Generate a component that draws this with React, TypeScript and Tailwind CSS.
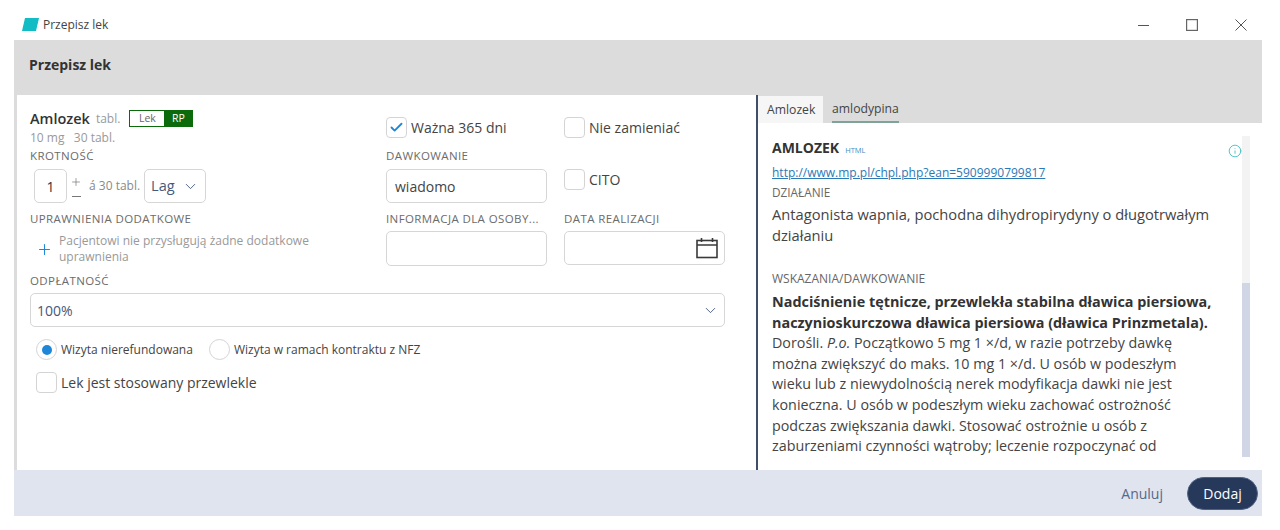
import { ChevronDown, Check, Plus, Info } from 'lucide-react';

const Label = ({ children, className = '' }: { children: React.ReactNode; className?: string }) => (
  <div className={`h-[16px] text-[11.5px] leading-[16px] tracking-[0.4px] text-[#6b6b6b] whitespace-nowrap ${className}`}>{children}</div>
);

const Box = ({ checked = false }: { checked?: boolean }) => (
  <span className="flex h-[21px] w-[21px] shrink-0 items-center justify-center rounded-[4px] border border-[#d4d4d4] bg-white">
    {checked && <Check size={15} strokeWidth={3} className="text-[#1f87d8]" />}
  </span>
);

const field = 'rounded-[5px] border border-[#d6d6d6] bg-white';

const CalendarIcon = () => (
  <svg width="22" height="22" viewBox="0 0 22 22" fill="none" stroke="#3a3a3a" strokeWidth="1.6">
    <rect x="1" y="3.5" width="20" height="17" />
    <path d="M1 8h20M5.5 1v4M16.5 1v4" />
  </svg>
);

export default function App() {
  return (
    <div className="h-[530px] w-[1280px] overflow-hidden bg-white font-['Open_Sans',sans-serif] text-[#333]">
      <div className="mx-[14px] h-[516px] w-[1248px] flex flex-col">
        {/* Title bar */}
        <div className="flex h-[40px] shrink-0 items-center bg-white pl-[8px] pr-[15px] pt-[9px]">
          <svg width="17" height="13" viewBox="0 0 17 13" className="mr-[4px]">
            <polygon points="3,0 17,0 14,13 0,13" fill="#12bcc4" />
          </svg>
          <span className="text-[12px] text-[#444]">Przepisz lek</span>
          <div className="ml-auto flex items-center gap-[37px]">
            <svg width="11" height="12" viewBox="0 0 11 12" fill="none" stroke="#555" strokeWidth="1">
              <path d="M0 6.5h11" />
            </svg>
            <svg width="12" height="12" viewBox="0 0 12 12" fill="none" stroke="#666" strokeWidth="1.2">
              <rect x="0.6" y="0.6" width="10.8" height="10.8" />
            </svg>
            <svg width="12" height="12" viewBox="0 0 12 12" fill="none" stroke="#555" strokeWidth="1">
              <path d="M0.5 0.5l11 11M11.5 0.5l-11 11" />
            </svg>
          </div>
        </div>

        {/* Header */}
        <div className="flex h-[55px] shrink-0 items-center bg-[#dcdcdc] pb-[7px] pl-[15px] text-[14px] font-bold text-[#333]">
          Przepisz lek
        </div>

        <div className="flex h-[375px] shrink-0 bg-[#dcdcdc]">
          {/* Form */}
          <div className="ml-[3px] w-[739px] shrink-0 bg-white pl-[13px] pt-[15px]">
            <div className="flex">
              <div className="w-[356px] shrink-0">
                <div className="flex h-[18px] items-center">
                  <span className="text-[14.5px] font-semibold text-[#333]">Amlozek</span>
                  <span className="ml-[6px] text-[12px] text-[#9a9a9a]">tabl.</span>
                  <div className="mb-[2px] ml-[9px] flex h-[17px] w-[64px] border border-[#0b6b0b] text-[10.5px] leading-[15px]">
                    <span className="w-[34px] text-center text-[#666]">Lek</span>
                    <span className="flex-1 bg-[#0b6b0b] text-center text-white">RP</span>
                  </div>
                </div>
                <div className="mt-[1px] h-[17px] text-[12px] leading-[17px] text-[#9a9a9a]">10 mg&nbsp;&nbsp;&nbsp;30 tabl.</div>
                <Label className="mt-[2px]">KROTNOŚĆ</Label>
                <div className="mt-[5px] flex h-[34px] items-center pl-[4px]">
                  <div className={`flex h-[34px] w-[33px] items-center justify-center text-[14px] text-[#333] ${field}`}>1</div>
                  <div className="ml-[4px] flex w-[10px] flex-col items-center text-[#777]">
                    <Plus size={12} strokeWidth={1.4} />
                    <div className="mt-[8px] h-px w-[9px] bg-[#777]" />
                  </div>
                  <span className="ml-[8px] text-[12px] text-[#8a8a8a] whitespace-nowrap">á 30 tabl.</span>
                  <div className={`ml-[4px] flex h-[34px] w-[62px] items-center justify-between pl-[6px] pr-[6px] text-[14.5px] text-[#44597d] ${field}`}>
                    Lag
                    <ChevronDown size={17} strokeWidth={1.3} className="text-[#44597d]" />
                  </div>
                </div>
                <Label className="mt-[8px]">UPRAWNIENIA DODATKOWE</Label>
                <div className="mt-[6px] flex items-center pl-[6px]">
                  <Plus size={17} strokeWidth={1.5} className="text-[#1f87d8]" />
                  <div className="ml-[6px] w-[270px] text-[12px] leading-[16px] text-[#999]">
                    Pacjentowi nie przysługują żadne dodatkowe uprawnienia
                  </div>
                </div>
              </div>

              <div className="w-[161px] shrink-0">
                <div className="mt-[7px] flex h-[21px] items-center gap-[4px] text-[14px] text-[#444]">
                  <Box checked />
                  Ważna 365 dni
                </div>
                <Label className="mt-[10px]">DAWKOWANIE</Label>
                <div className={`mt-[5px] flex h-[34px] items-center pl-[8px] text-[14px] text-[#444] ${field}`}>wiadomo</div>
                <Label className="mt-[8px]">INFORMACJA DLA OSOBY...</Label>
                <div className={`mt-[4px] h-[35px] ${field}`} />
              </div>

              <div className="ml-[17px] w-[161px] shrink-0">
                <div className="mt-[7px] flex h-[21px] items-center gap-[4px] text-[14px] text-[#444]">
                  <Box />
                  Nie zamieniać
                </div>
                <div className="mt-[31px] flex h-[21px] items-center gap-[4px] text-[14px] text-[#444]">
                  <Box />
                  CITO
                </div>
                <Label className="mt-[21px]">DATA REALIZACJI</Label>
                <div className={`mt-[4px] flex h-[34px] items-center justify-end pr-[6px] ${field}`}>
                  <CalendarIcon />
                </div>
              </div>
            </div>

            <Label className="mt-[7px]">ODPŁATNOŚĆ</Label>
            <div className={`mt-[4px] flex h-[34px] w-[695px] items-center justify-between pl-[6px] pr-[5px] text-[14px] text-[#44597d] ${field}`}>
              100%
              <ChevronDown size={17} strokeWidth={1.3} className="text-[#44597d]" />
            </div>

            <div className="mt-[12px] flex h-[21px] items-center pl-[6px] text-[12px] text-[#444]">
              <span className="flex h-[21px] w-[21px] items-center justify-center rounded-full border border-[#d4d4d4]">
                <span className="h-[10px] w-[10px] rounded-full bg-[#1f87d8]" />
              </span>
              <span className="ml-[4px]">Wizyta nierefundowana</span>
              <span className="ml-[16px] h-[21px] w-[21px] rounded-full border border-[#d4d4d4]" />
              <span className="ml-[4px]">Wizyta w ramach kontraktu z NFZ</span>
            </div>
            <div className="mt-[12px] flex h-[21px] items-center gap-[4px] pl-[6px] text-[14px] text-[#444]">
              <Box />
              Lek jest stosowany przewlekle
            </div>
          </div>

          {/* Drug info */}
          <div className="flex min-w-0 flex-1 flex-col border-l-[2px] border-[#3f4f68]">
            <div className="flex h-[28px] shrink-0 items-end bg-[#dcdcdc] text-[12.2px] text-[#444]">
              <div className="flex h-[27px] w-[65px] items-center bg-[#f6f6f6] pl-[9px] pt-[1px]">Amlozek</div>
              <div className="ml-[9px] flex h-[27px] items-center border-b-[2px] border-[#7fa396] pt-[1px]">amlodypina</div>
            </div>
            <div className="flex min-h-0 flex-1 bg-white pl-[14px]">
              <div className="min-w-0 flex-1 overflow-hidden pt-[15px]">
                <div className="flex items-center justify-between">
                  <div className="flex items-baseline">
                    <span className="text-[14px] font-bold leading-[20px] text-[#333]">AMLOZEK</span>
                    <span className="ml-[6px] text-[7.5px] text-[#3c8fc4]">HTML</span>
                  </div>
                  <Info size={14} strokeWidth={1.4} className="mt-[5px] text-[#2fb8bd]" />
                </div>
                <div className="mt-[6px] text-[12px] leading-[18px] whitespace-nowrap text-[#2c79b5] underline">http://www.mp.pl/chpl.php?ean=5909990799817</div>
                <div className="mt-[2px] text-[11.8px] leading-[16px] text-[#666]">DZIAŁANIE</div>
                <div className="mt-[4px] text-[14.7px] leading-[21px] text-[#444] whitespace-nowrap">
                  Antagonista wapnia, pochodna dihydropirydyny o długotrwałym<br />działaniu
                </div>
                <div className="mt-[25px] text-[12px] leading-[16px] text-[#666]">WSKAZANIA/DAWKOWANIE</div>
                <div className="mt-[5px] text-[14.3px] leading-[20.6px] text-[#444] whitespace-nowrap">
                  <b className="text-[14.4px] text-[#333]">Nadciśnienie tętnicze, przewlekła stabilna dławica piersiowa,<br />naczynioskurczowa dławica piersiowa (dławica Prinzmetala).</b><br />
                  Dorośli. <i>P.o.</i> Początkowo 5 mg 1 ×/d, w razie potrzeby dawkę<br />
                  można zwiększyć do maks. 10 mg 1 ×/d. U osób w podeszłym<br />
                  wieku lub z niewydolnością nerek modyfikacja dawki nie jest<br />
                  konieczna. U osób w podeszłym wieku zachować ostrożność<br />
                  podczas zwiększania dawki. Stosować ostrożnie u osób z<br />
                  zaburzeniami czynności wątroby; leczenie rozpoczynać od
                </div>
              </div>
              {/* Scrollbar */}
              <div className="mr-[12px] mt-[13px] mb-[13px] flex w-[8px] shrink-0 flex-col justify-end bg-[#f3f3f3]">
                <div className="h-[174px] bg-[#d0d6e6]" />
              </div>
            </div>
          </div>
        </div>

        {/* Footer */}
        <div className="flex h-[46px] shrink-0 items-center justify-end bg-[#dfe4ef] pr-[4px]">
          <span className="text-[14px] text-[#56688c]">Anuluj</span>
          <button className="ml-[24px] h-[33px] w-[71px] rounded-full border border-[#50607f] bg-[#27395b] text-[14px] text-white">Dodaj</button>
        </div>
      </div>
    </div>
  );
}
